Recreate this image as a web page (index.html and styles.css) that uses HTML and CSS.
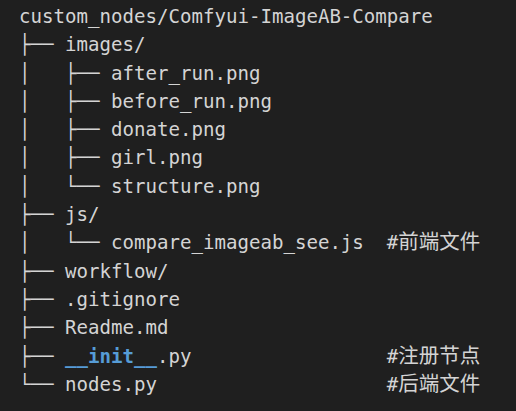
FILE: index.html
```html
<!DOCTYPE html>
<html lang="zh">
<head>
<meta charset="utf-8">
<title>Tree</title>
<link rel="stylesheet" href="styles.css">
</head>
<body>
<div class="tree">
<div class="line">custom_nodes/Comfyui-ImageAB-Compare</div>
<div class="line">├── images/</div>
<div class="line">│   ├── after_run.png</div>
<div class="line">│   ├── before_run.png</div>
<div class="line">│   ├── donate.png</div>
<div class="line">│   ├── girl.png</div>
<div class="line">│   └── structure.png</div>
<div class="line">├── js/</div>
<div class="line">│   └── compare_imageab_see.js  #<span class="cjk">前端文件</span></div>
<div class="line">├── workflow/</div>
<div class="line">├── .gitignore</div>
<div class="line">├── Readme.md</div>
<div class="line">├── <span class="kw">__init__</span>.py                 #<span class="cjk">注册节点</span></div>
<div class="line">└── nodes.py                    #<span class="cjk">后端文件</span></div>
</div>
</body>
</html>
```
FILE: styles.css
```css
html, body {
  margin: 0;
  padding: 0;
  background: #1f1f1f;
}
.tree {
  padding: 3px 0 0 19px;
  font-family: "DejaVu Sans Mono", "Liberation Mono", monospace;
  font-size: 19.1px;
  color: #d4d4d4;
}
.line {
  height: 28.3px;
  line-height: 28.3px;
  white-space: pre;
  overflow: visible;
}
.kw {
  color: #569cd6;
  font-weight: bold;
}
.cjk {
  font-family: "Noto Sans CJK SC", sans-serif;
  font-size: 20.5px;
  line-height: 0;
}
```
